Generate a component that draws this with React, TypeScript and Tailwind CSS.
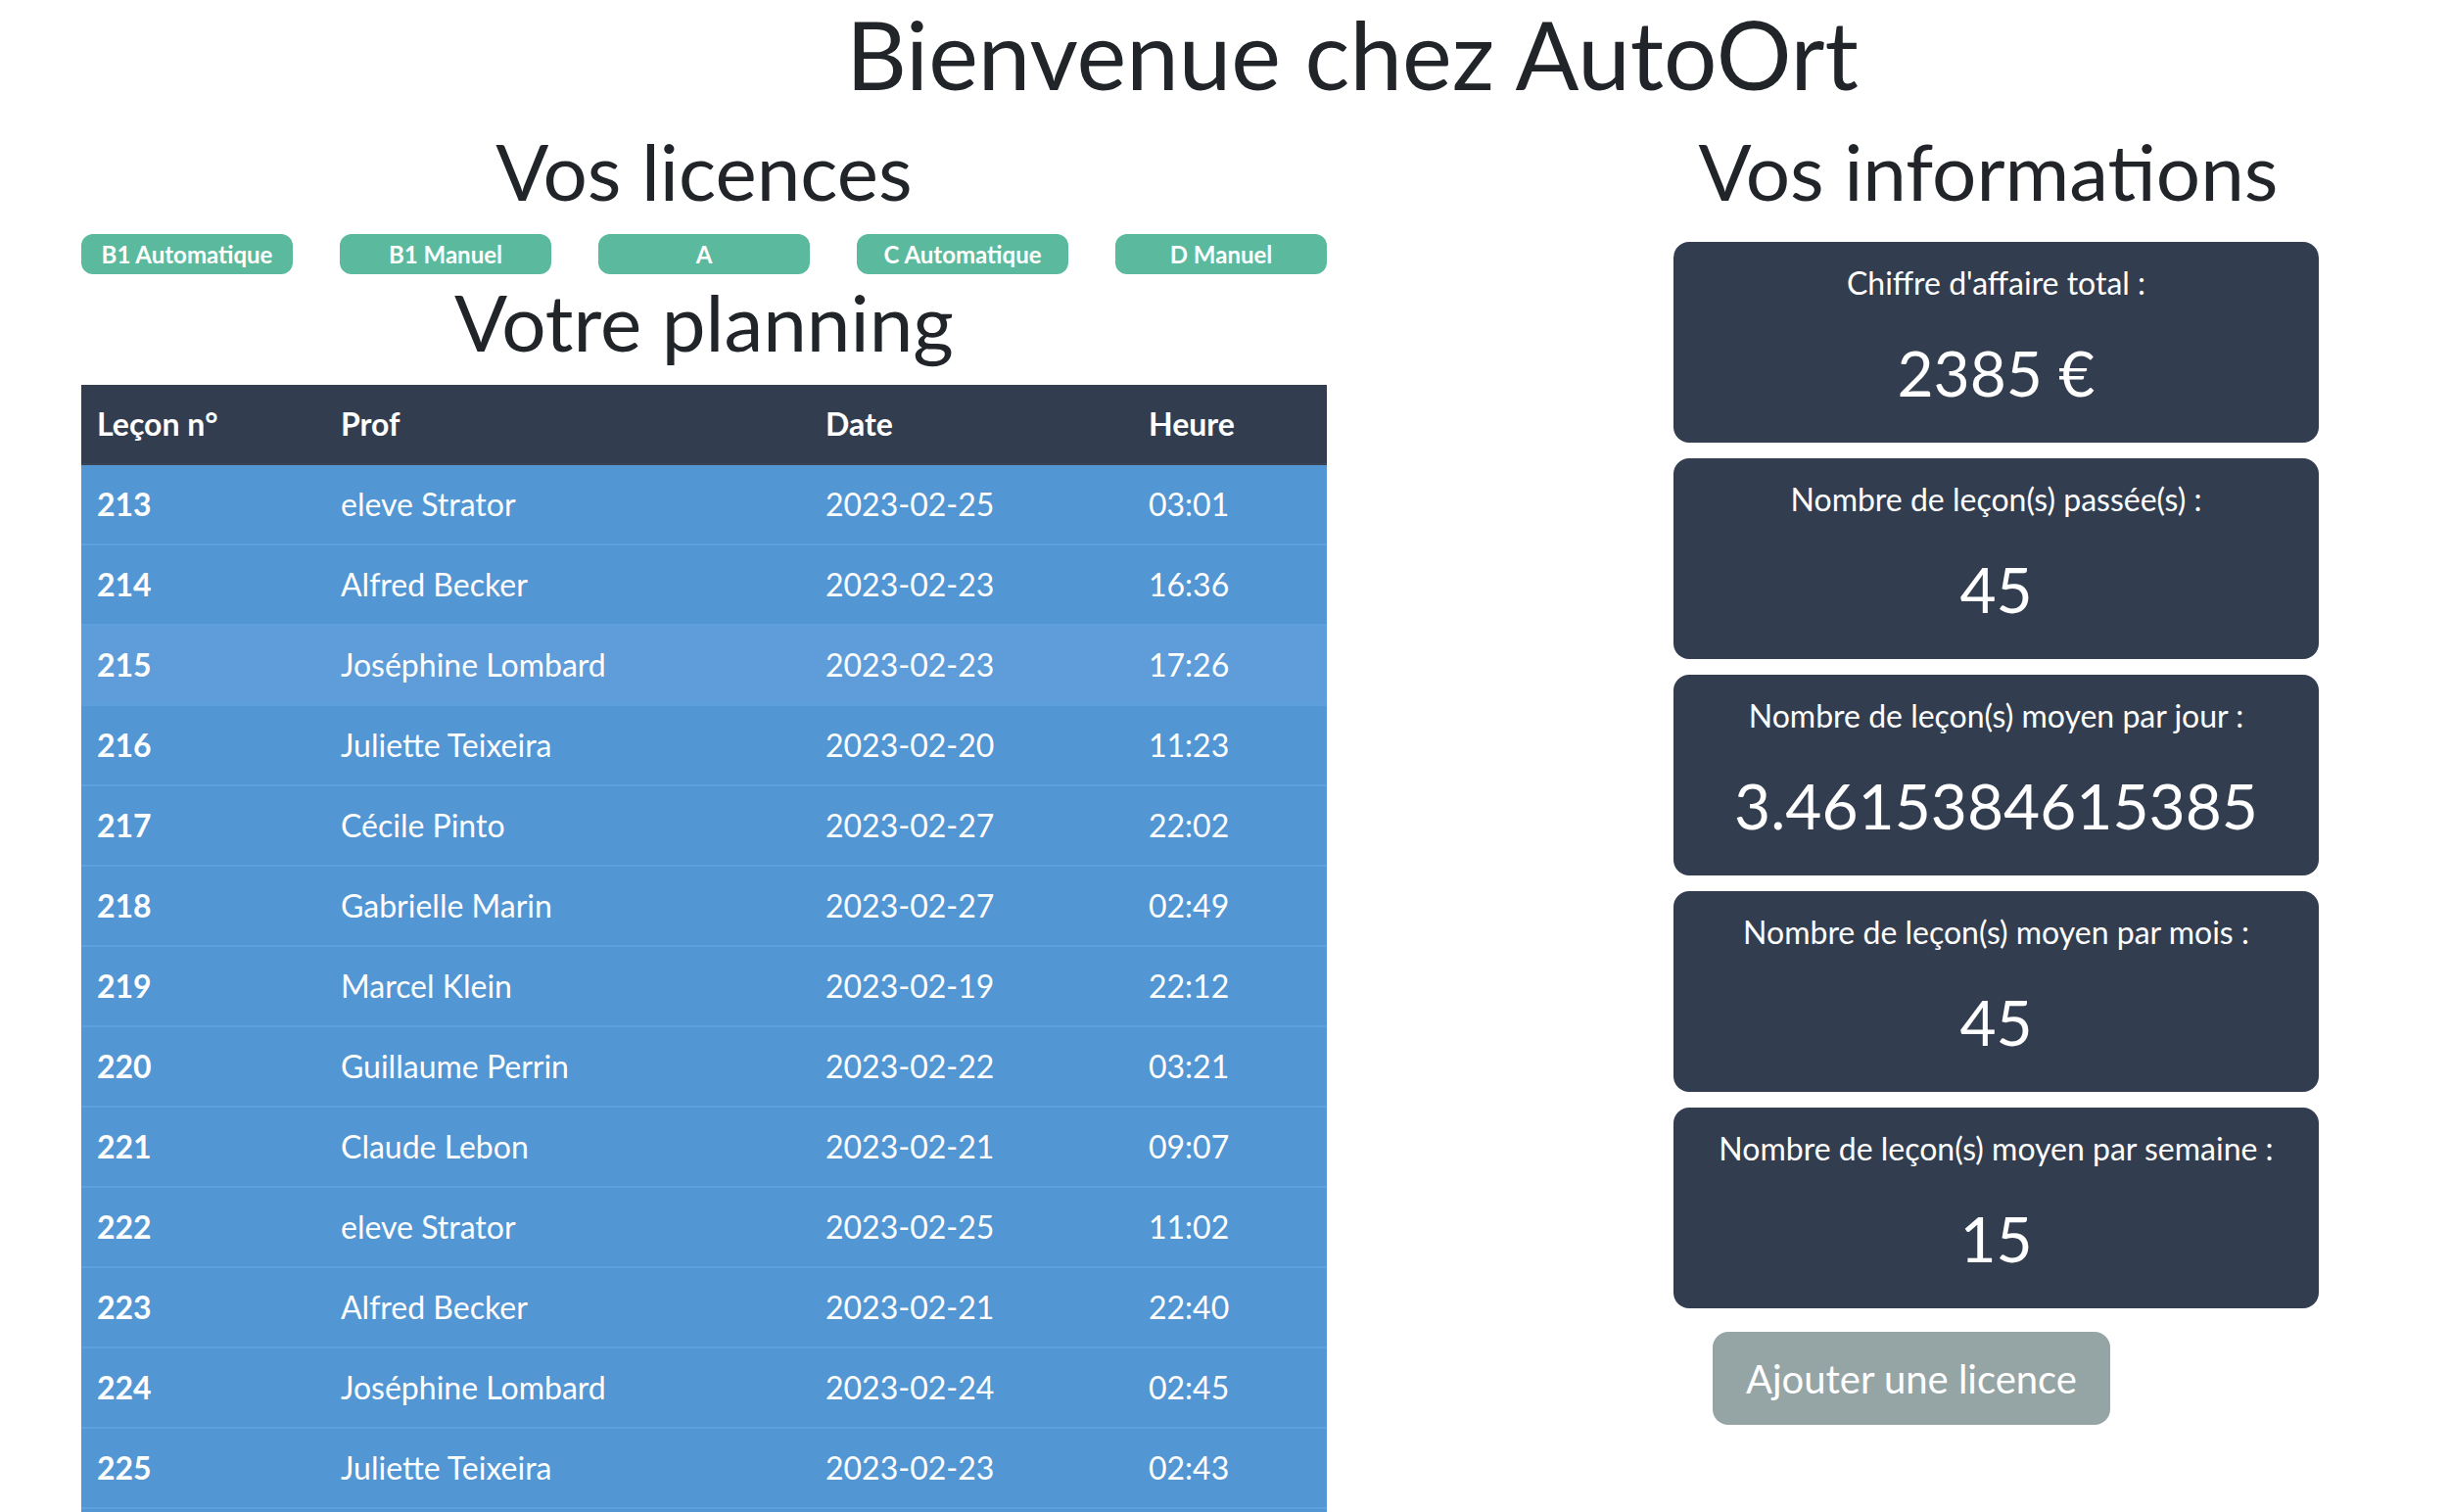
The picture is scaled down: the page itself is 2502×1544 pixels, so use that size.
import React from "react";

const licences = ["B1 Automatique", "B1 Manuel", "A", "C Automatique", "D Manuel"];

const rows: [number, string, string, string][] = [
  [213, "eleve Strator", "2023-02-25", "03:01"],
  [214, "Alfred Becker", "2023-02-23", "16:36"],
  [215, "Joséphine Lombard", "2023-02-23", "17:26"],
  [216, "Juliette Teixeira", "2023-02-20", "11:23"],
  [217, "Cécile Pinto", "2023-02-27", "22:02"],
  [218, "Gabrielle Marin", "2023-02-27", "02:49"],
  [219, "Marcel Klein", "2023-02-19", "22:12"],
  [220, "Guillaume Perrin", "2023-02-22", "03:21"],
  [221, "Claude Lebon", "2023-02-21", "09:07"],
  [222, "eleve Strator", "2023-02-25", "11:02"],
  [223, "Alfred Becker", "2023-02-21", "22:40"],
  [224, "Joséphine Lombard", "2023-02-24", "02:45"],
  [225, "Juliette Teixeira", "2023-02-23", "02:43"],
  [226, "Cécile Pinto", "2023-02-26", "14:18"],
];

const stats: [string, string][] = [
  ["Chiffre d'affaire total :", "2385 €"],
  ["Nombre de leçon(s) passée(s) :", "45"],
  ["Nombre de leçon(s) moyen par jour :", "3.4615384615385"],
  ["Nombre de leçon(s) moyen par mois :", "45"],
  ["Nombre de leçon(s) moyen par semaine :", "15"],
];

export default function App() {
  return (
    <div className="min-h-screen bg-white text-[#212529] overflow-hidden" style={{ fontFamily: "Lato, 'Open Sans', sans-serif" }}>
      <h1 className="pl-[260px] text-center text-[96px] leading-[110px] font-normal mb-[16px]">
        Bienvenue chez AutoOrt
      </h1>
      <div className="flex items-start">
        <div className="ml-[83px] w-[1272px] shrink-0">
          <h2 className="text-center text-[80px] leading-[96px] font-normal mb-[17px]">Vos licences</h2>
          <div className="flex gap-[48px]">
            {licences.map((l) => (
              <div
                key={l}
                className="w-[216px] h-[41px] rounded-[12px] bg-[#5bba9d] text-white font-bold text-[24px] leading-[41px] text-center"
              >
                {l}
              </div>
            ))}
          </div>
          <h2 className="text-center text-[80px] leading-[96px] font-normal mt-[0px] mb-[17px]">Votre planning</h2>
          <table className="w-[1272px] table-fixed border-collapse text-white text-[32px] leading-[48px]">
            <colgroup>
              <col className="w-[249px]" />
              <col className="w-[495px]" />
              <col className="w-[330px]" />
              <col className="w-[198px]" />
            </colgroup>
            <thead>
              <tr className="bg-[#323e50] border-b-2 border-[#3b4453]">
                <th className="text-left font-bold px-[16px] py-[16px]">Leçon n°</th>
                <th className="text-left font-bold px-[16px] py-[16px]">Prof</th>
                <th className="text-left font-bold px-[16px] py-[16px]">Date</th>
                <th className="text-left font-bold px-[16px] py-[16px]">Heure</th>
              </tr>
            </thead>
            <tbody>
              {rows.map((r, i) => (
                <tr
                  key={r[0]}
                  className={(i === 2 ? "bg-[#5e9dd9]" : "bg-[#5296d4]") + " border-b-2 border-[#5ca0dc]"}
                >
                  <th className="text-left font-bold px-[16px] py-[16px]">{r[0]}</th>
                  <td className="px-[16px] py-[16px]">{r[1]}</td>
                  <td className="px-[16px] py-[16px]">{r[2]}</td>
                  <td className="px-[16px] py-[16px]">{r[3]}</td>
                </tr>
              ))}
            </tbody>
          </table>
        </div>
        <div className="ml-[354px] w-[659px] shrink-0">
          <h2 className="pr-[16px] text-center text-[80px] leading-[96px] font-normal mb-[25px]">Vos informations</h2>
          <div className="flex flex-col gap-[16px]">
            {stats.map(([label, value]) => (
              <div key={label} className="h-[205px] rounded-[16px] bg-[#323e50] text-white text-center pt-[18px]">
                <div className="text-[32px] leading-[48px]">{label}</div>
                <div className="text-[64px] leading-[77px] mt-[29px]">{value}</div>
              </div>
            ))}
          </div>
          <button className="ml-[40px] mt-[24px] h-[95px] px-[34px] rounded-[16px] bg-[#95a5a6] text-white text-[40px] leading-[60px]">
            Ajouter une licence
          </button>
        </div>
      </div>
    </div>
  );
}
